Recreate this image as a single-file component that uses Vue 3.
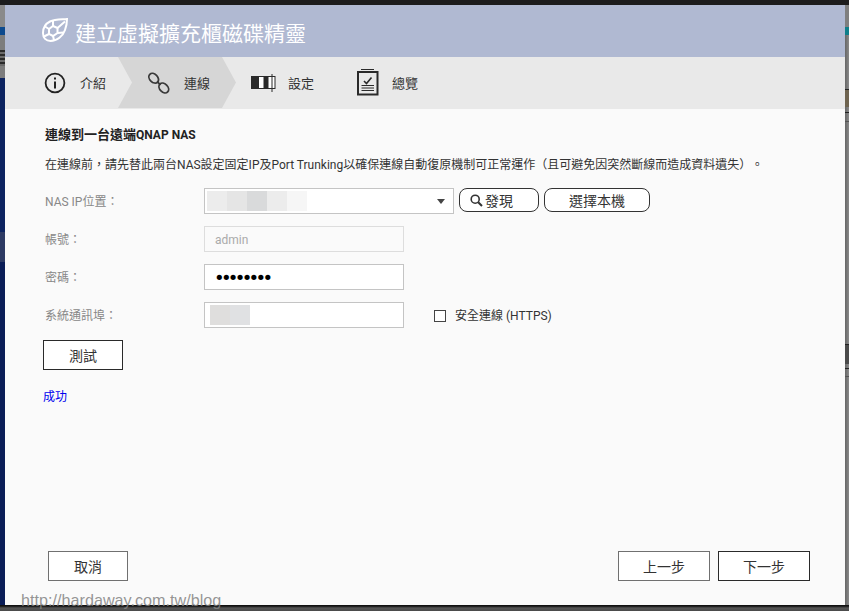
<script setup>
const steps = [
  { key: 'intro', label: '介紹' },
  { key: 'link', label: '連線', active: true },
  { key: 'set', label: '設定' },
  { key: 'sum', label: '總覽' },
]
const ipBlocks = ['#ececec', '#e5e5e5', '#d9dadb', '#ececec', '#f6f6f6']
const portBlocks = ['#dfdedd', '#e0e1e3']
</script>

<template>
  <div class="desk">
    <div class="edge edge-top"></div>
    <div class="middle">
      <div class="strip strip-left">
        <i class="s-grey1"></i><i class="s-blue"></i><i class="s-grey2a"></i><i class="s-mark"></i><i class="s-grey2b"></i><i class="s-navy1"></i><i class="s-patch"></i><i class="s-navy2"></i>
      </div>
      <main class="win">
        <header class="head">
          <svg class="leaf" width="26" height="24" viewBox="0 0 26 24" fill="none" stroke="#fff">
            <path d="M25 1C20 1.500 13 1 8 3.500C3 6 1 11 1 15C1 20 4 23 8.500 23C15 23 21 18 23 12C24.500 8 25 4 25 1Z" stroke-width="2" />
            <path d="M7 11L11 8L15.500 10L15.500 15L11 18L7 16Z" stroke-width="2" />
            <path d="M7 11L3 8.500M11 8L11 3M15.500 10L23 3.500M15.500 15L21.500 14.500M11 18L12 22M7 16L2 18.500" stroke-width="2" />
          </svg>
          <h1 class="title">建立虛擬擴充櫃磁碟精靈</h1>
        </header>

        <nav class="steps">
          <div v-for="s in steps" :key="s.key" class="step" :class="['step-' + s.key, { active: s.active }]">
            <svg v-if="s.key === 'intro'" width="22" height="22" viewBox="0 0 22 22" fill="none" stroke="#222">
              <circle cx="11" cy="11" r="9.400" stroke-width="1.800" />
              <path d="M11 9.500V16.500" stroke-width="2" />
              <path d="M11 5.500V7.500" stroke-width="2" />
            </svg>
            <svg v-else-if="s.key === 'link'" width="22" height="22" viewBox="0 0 22 22" fill="none" stroke="#3a3a3a" stroke-width="1.800">
              <ellipse cx="5.700" cy="6.200" rx="5.500" ry="4" transform="rotate(45 5.700 6.200)" />
              <ellipse cx="15.800" cy="16" rx="5.500" ry="4" transform="rotate(45 15.800 16)" />
              <path d="M9 9.500L12.500 12.800" />
            </svg>
            <svg v-else-if="s.key === 'set'" width="25" height="18" viewBox="0 0 25 18">
              <rect x="0.500" y="2.500" width="23.500" height="12" fill="#fff" stroke="#2a2a2a" />
              <rect x="0" y="2" width="8" height="13" fill="#2a2a2a" />
              <rect x="12.500" y="2" width="5" height="13" fill="#2a2a2a" />
              <rect x="20.500" y="0" width="1" height="18" fill="#2a2a2a" />
            </svg>
            <svg v-else width="22" height="27" viewBox="0 0 22 27" fill="none" stroke="#2a2a2a">
              <path d="M4 0.500H17" stroke-width="1" />
              <rect x="1" y="3" width="19.500" height="22.500" stroke-width="2" />
              <path d="M7 12L9.500 14.500L14.500 8.500" stroke-width="1.600" />
              <path d="M4.500 16.500H17M4.500 19H17M4.500 21.500H17" stroke-width="1" />
            </svg>
            <span class="step-label">{{ s.label }}</span>
          </div>
        </nav>

        <section class="body">
          <div class="content">
            <h2 class="sub"><span class="sub-cjk">連線到一台遠端</span>QNAP NAS</h2>
            <p class="desc">在連線前，請先替此兩台NAS設定固定IP及Port Trunking以確保連線自動復原機制可正常運作（且可避免因突然斷線而造成資料遺失）。</p>

            <div class="rows">
              <div class="row">
                <label class="lbl">NAS IP位置：</label>
                <div class="field select">
                  <span class="blur blur-ip">
                    <i v-for="c in ipBlocks" :key="c + 'a'" :style="{ background: c }"></i>
                  </span>
                  <span class="caret"></span>
                </div>
                <button class="pill pill-find">
                  <svg width="13" height="13" viewBox="0 0 13 13" fill="none" stroke="#333" stroke-width="1.600">
                    <circle cx="5.200" cy="5.200" r="4" />
                    <path d="M8.200 8.200L12 12" stroke-width="2" />
                  </svg>
                  發現
                </button>
                <button class="pill pill-local">選擇本機</button>
              </div>
              <div class="row">
                <label class="lbl">帳號：</label>
                <div class="field short disabled">admin</div>
              </div>
              <div class="row">
                <label class="lbl">密碼：</label>
                <div class="field short pwd">••••••••</div>
              </div>
              <div class="row">
                <label class="lbl">系統通訊埠：</label>
                <div class="field short">
                  <span class="blur blur-port">
                    <i v-for="c in portBlocks" :key="c" :style="{ background: c }"></i>
                  </span>
                </div>
                <span class="check"></span>
                <span class="check-label">安全連線 (HTTPS)</span>
              </div>
            </div>

            <button class="btn btn-dark btn-test">測試</button>
            <p class="ok">成功</p>
          </div>

          <footer class="foot">
            <button class="btn btn-grey btn-cancel">取消</button>
            <div class="foot-right">
              <button class="btn btn-grey btn-nav">上一步</button>
              <button class="btn btn-dark btn-nav">下一步</button>
            </div>
          </footer>
        </section>
      </main>
      <div class="strip strip-right">
        <i class="r-grey1"></i><i class="r-teal"></i><i class="r-grey2 h54"></i><i class="r-line"></i><i class="r-tan"></i><i class="r-grey2 h14"></i><i class="r-line"></i><i class="r-grey2 h8"></i><i class="r-soft"></i><i class="r-grey2 h222"></i><i class="r-line"></i><i class="r-dark"></i><i class="r-grey2 h4"></i><i class="r-line"></i><i class="r-grey2 h7"></i><i class="r-soft"></i><i class="r-grey2 fill"></i>
      </div>
    </div>
    <div class="edge edge-bottom"></div>
    <div class="mark">http://hardaway.com.tw/blog</div>
  </div>
</template>

<style>
html, body { margin: 0; background: #1a1a1a; }
</style>

<style scoped>
.desk {
  position: relative;
  width: 849px;
  height: 611px;
  overflow: hidden;
  display: flex;
  flex-direction: column;
  font-family: Roboto, "Noto Sans CJK TC", sans-serif;
  font-size: 12px;
  color: #333;
  text-spacing-trim: space-all;
}
.edge { flex: none; }
.edge-top { height: 5px; background: #1c1c1c; }
.edge-bottom { height: 6px; background: linear-gradient(#111 0, #111 1px, #555 3px, #4a4a4a); }
.middle { flex: 1; display: flex; min-height: 0; }
.strip { flex: none; display: flex; flex-direction: column; }
.strip i { display: block; flex: none; }
.strip-left { width: 5px; }
.s-grey1 { height: 22px; background: #8a8a8a; }
.s-blue { height: 8px; background: #0d4a8e; }
.s-grey2a { height: 15px; background: #7d7d7d; }
.s-mark { height: 16px; background: repeating-linear-gradient(#2a2a2a 0, #2a2a2a 2px, #6a6a6a 2px, #6a6a6a 4px); }
.s-grey2b { height: 12px; background: #7d7d7d; }
.s-navy1 { height: 154px; background: #0c2360; }
.s-patch { height: 30px; background: #2d3a63; }
.strip i.s-navy2 { flex: 1; background: #0a1d57; }
.strip-right { width: 4px; }
.r-grey1 { height: 22px; background: #7f7f7f; }
.r-teal { height: 8px; background: #0f7f8a; }
.r-grey2 { background: linear-gradient(90deg, #666, #8a8a8a); }
.h54 { height: 54px; }
.h14 { height: 5px; }
.h8 { height: 8px; }
.h222 { height: 222px; }
.h4 { height: 4px; }
.h7 { height: 7px; }
.strip i.fill { flex: 1; }
.r-line { height: 1px; background: #222; }
.r-soft { height: 1px; background: #555; }
.r-tan { height: 17px; background: #6f6450; }
.r-dark { height: 19px; background: #4a4a4a; }

.win { width: 840px; display: flex; flex-direction: column; background: #fafafa; }

.head {
  height: 52px;
  flex: none;
  background: #b0b9d2;
  display: flex;
  align-items: center;
  padding-left: 37px;
  gap: 7px;
}
.leaf { margin-top: -2px; }
.title {
  margin: 2px 0 0;
  font-size: 21px;
  font-weight: 400;
  color: #fff;
  font-family: "Noto Sans CJK TC", sans-serif;
}

.steps {
  height: 52px;
  flex: none;
  background: #e9e9e9;
  display: flex;
}
.step { display: flex; align-items: center; height: 51px; flex: none; }
.step-label { font-size: 13px; color: #333; font-family: "Noto Sans CJK TC", sans-serif; }
.step-intro { width: 113px; padding-left: 39px; box-sizing: border-box; gap: 14px; }
.step-link {
  width: 118px;
  padding-left: 30px;
  box-sizing: border-box;
  gap: 14px;
  background: #d6d6d6;
  clip-path: polygon(0 0, 104px 0, 118px 50%, 104px 100%, 0 100%, 14px 50%);
}
.step-set { width: 121px; padding-left: 15px; box-sizing: border-box; gap: 12px; }
.step-sum { padding-left: 0; gap: 13px; }

.body { flex: 1; display: flex; flex-direction: column; min-height: 0; }
.content { flex: 1; padding: 18px 0 0 38px; }
.sub {
  margin: 0 0 0 2px;
  font-size: 12px;
  line-height: 16px;
  font-weight: 700;
  color: #222;
}
.sub-cjk { font-size: 13px; }
.desc {
  margin: 14px 0 0 2px;
  font-size: 12px;
  line-height: 16px;
  color: #333;
  white-space: nowrap;
}
.rows { margin-top: 15px; display: flex; flex-direction: column; gap: 12px; }
.row { display: flex; align-items: flex-start; height: 26px; }
.lbl {
  width: 159px;
  margin-left: 2px;
  flex: none;
  line-height: 28px;
  color: #888;
  font-size: 12px;
}
.field {
  box-sizing: border-box;
  height: 26px;
  background: #fff;
  border: 1px solid #c4c4c4;
  display: flex;
  align-items: center;
  position: relative;
}
.select { width: 250px; }
.short { width: 200px; }
.disabled { border-color: #ddd; color: #aaa; padding: 1px 0 0 10px; background: #fafafa; }
.pwd {
  padding-left: 9px;
  color: #000;
  font-size: 18px;
  letter-spacing: -3.7px;
  font-family: "DejaVu Sans", sans-serif;
}
.blur { display: flex; height: 20px; }
.blur i { display: block; width: 20px; height: 20px; }
.blur-ip { margin-left: 2px; }
.blur-port { margin-left: 5px; }
.caret {
  position: absolute;
  right: 8px;
  top: 10px;
  border-left: 4px solid transparent;
  border-right: 4px solid transparent;
  border-top: 5px solid #444;
}
.pill {
  box-sizing: border-box;
  height: 24px;
  background: #fff;
  border: 1px solid #333;
  border-radius: 8px;
  font: inherit;
  font-size: 14px;
  color: #333;
  padding: 0;
  display: flex;
  align-items: center;
  justify-content: center;
}
.pill-find { width: 80px; margin-left: 5px; gap: 2px; justify-content: flex-start; padding-left: 10px; }
.pill-local { width: 106px; margin-left: 5px; }
.check {
  box-sizing: border-box;
  width: 12px;
  height: 12px;
  margin: 8px 0 0 30px;
  border: 1px solid #444;
  background: #fff;
  flex: none;
}
.check-label { margin-left: 9px; line-height: 29px; color: #333; }
.btn {
  box-sizing: border-box;
  height: 30px;
  background: #fff;
  font: inherit;
  font-size: 14px;
  color: #333;
  padding: 0;
  border-radius: 0;
}
.btn-dark { border: 1px solid #2a2a2a; }
.btn-grey { border: 1px solid #707070; }
.btn-test { display: block; width: 80px; margin-top: 12px; }
.ok { margin: 19px 0 0; font-size: 12px; line-height: 16px; color: #0000ee; }
.foot {
  flex: none;
  height: 54px;
  padding: 0 35px 0 43px;
  display: flex;
  justify-content: space-between;
  align-items: flex-start;
}
.foot-right { display: flex; gap: 8px; }
.btn-cancel { width: 80px; }
.btn-nav { width: 92px; }
.mark {
  position: absolute;
  left: 21px;
  top: 591px;
  font: 16.200px/19px "Liberation Sans", sans-serif;
  color: rgba(130, 130, 130, 0.85);
  white-space: nowrap;
}
</style>
